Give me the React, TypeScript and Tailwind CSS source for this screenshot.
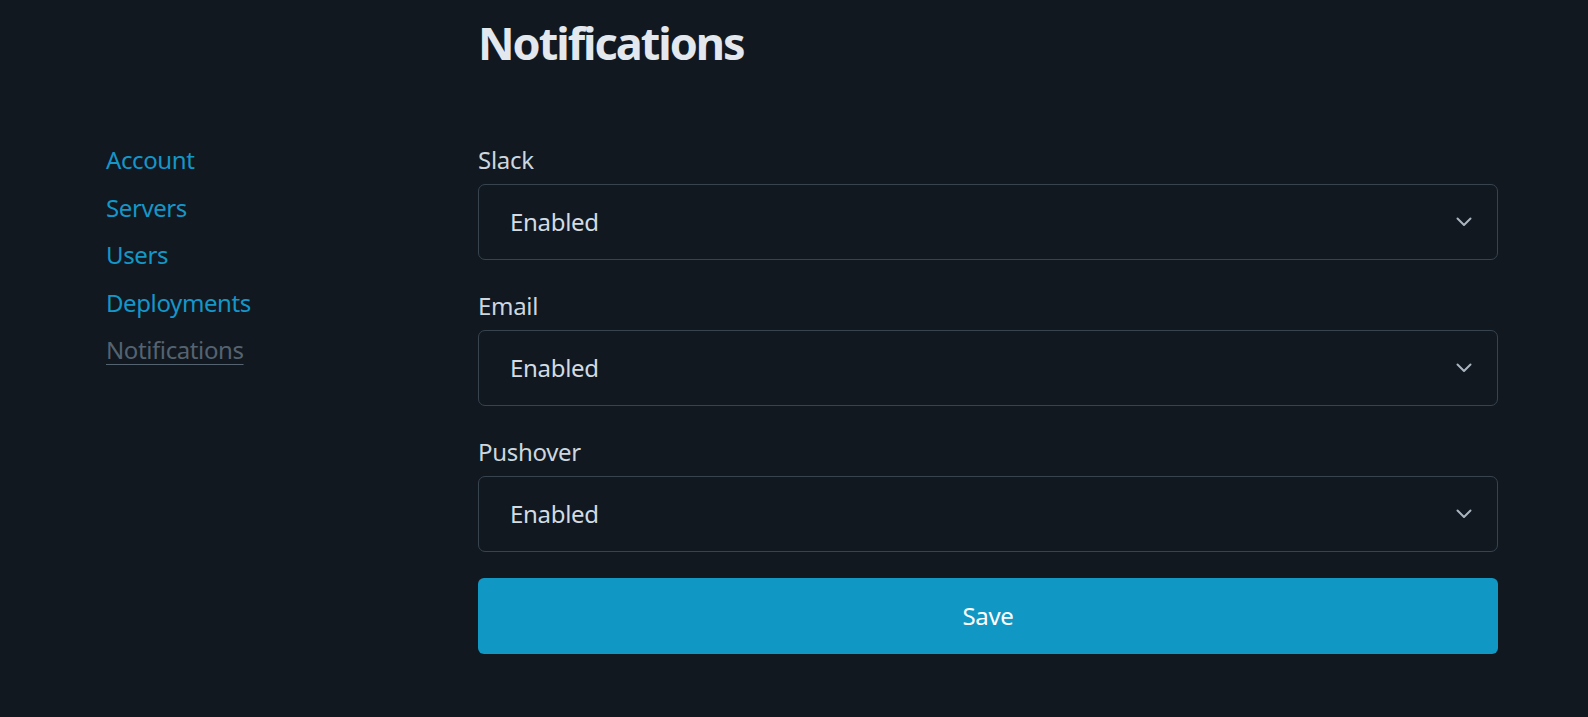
import React from "react";

const Chevron = () => (
  <svg width="16" height="10" viewBox="0 0 16 10" fill="none" className="shrink-0">
    <path d="M1.5 1.5 L8 8 L14.5 1.5" stroke="#aab4bf" strokeWidth="2" strokeLinecap="round" strokeLinejoin="round" />
  </svg>
);

const SelectField = ({ label }: { label: string }) => (
  <div className="flex flex-col gap-[8px]">
    <label className="text-[24px] leading-[32px] tracking-[-0.3px] text-[#cdd6df]">{label}</label>
    <div className="h-[76px] w-full rounded-[7px] border border-[#384350] flex items-center justify-between pl-[31px] pr-[25px]">
      <span className="text-[24px] leading-[32px] tracking-[-0.3px] text-[#d3dbe3]">Enabled</span>
      <Chevron />
    </div>
  </div>
);

export default function App() {
  const links = ["Account", "Servers", "Users", "Deployments"];
  return (
    <div
      className="min-h-[717px] w-full bg-[#111820] pt-[15px] pl-[106px]"
      style={{ fontFamily: '"Noto Sans", "Open Sans", sans-serif' }}
    >
      <div className="flex">
        <nav className="w-[372px] shrink-0 mt-[121px] flex flex-col">
          {links.map((l) => (
            <a key={l} className="text-[24px] leading-[47.5px] tracking-[-0.4px] text-[#1596c8] w-fit">
              {l}
            </a>
          ))}
          <a className="text-[24px] leading-[47.5px] tracking-[-0.4px] text-[#556371] underline underline-offset-[5px] decoration-1 w-fit">
            Notifications
          </a>
        </nav>
        <main className="w-[1020px] flex flex-col">
          <h1 className="text-[45px] leading-[56px] font-bold tracking-[-2px] text-[#e3e8ee]">Notifications</h1>
          <div className="mt-[73px] flex flex-col gap-[30px]">
            <SelectField label="Slack" />
            <SelectField label="Email" />
            <SelectField label="Pushover" />
          </div>
          <button className="mt-[26px] h-[76px] w-full rounded-[6px] bg-[#1197c3] text-white text-[24px] leading-[32px] tracking-[-0.3px]">
            Save
          </button>
        </main>
      </div>
    </div>
  );
}
